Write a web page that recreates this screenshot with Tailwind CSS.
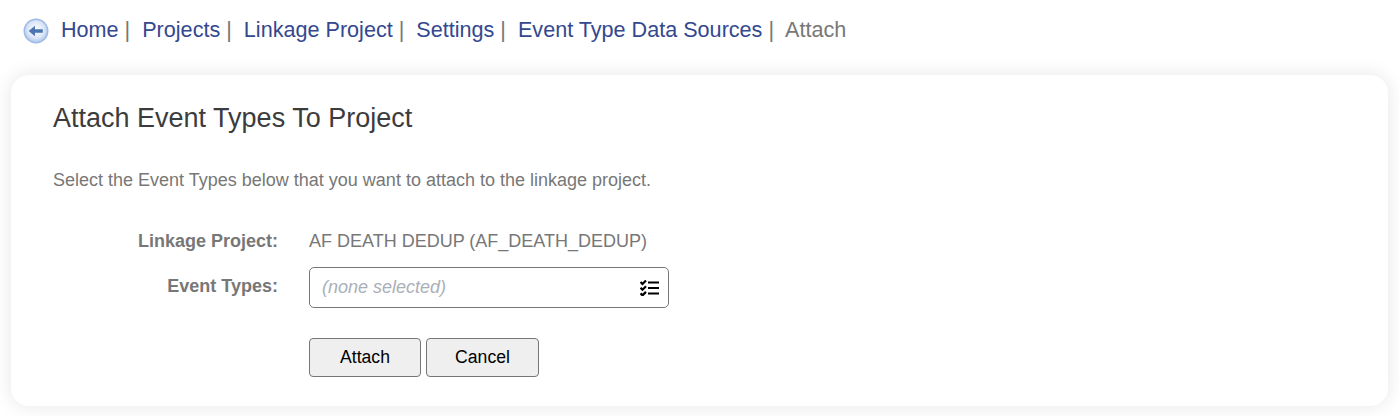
<!DOCTYPE html>
<html lang="en">
<head>
    <meta charset="UTF-8">
    <title>Attach Event Types To Project</title>
    <script src="https://cdn.jsdelivr.net/npm/@tailwindcss/browser@4"></script>
</head>
<body class="bg-white font-['Liberation_Sans',Arial,sans-serif] h-[416px] overflow-hidden">

    <!-- Breadcrumb -->
    <nav class="flex items-center h-[60px] pl-[23px] text-[21.6px] text-[#777]">
        <svg class="w-[26px] h-[26px] mr-[12px] mt-[2px]" viewBox="0 0 25 25">
            <defs>
                <radialGradient id="backFill" cx="50%" cy="45%" r="55%">
                    <stop offset="0%" stop-color="#ffffff"/>
                    <stop offset="65%" stop-color="#dbe6f7"/>
                    <stop offset="100%" stop-color="#a9c3ea"/>
                </radialGradient>
            </defs>
            <circle cx="12.5" cy="12.5" r="11.3" fill="url(#backFill)" stroke="#9dbbe6" stroke-width="1.4"/>
            <path d="M5.5 12.5 L11.5 7.5 V10.8 H19 V14.2 H11.5 V17.5 Z" fill="#4a75b0"/>
        </svg>
        <a class="text-[#34488f]">Home</a><span class="ml-[6px] mr-[12px]">|</span>
        <a class="text-[#34488f]">Projects</a><span class="ml-[6px] mr-[12px]">|</span>
        <a class="text-[#34488f]">Linkage Project</a><span class="ml-[6px] mr-[12px]">|</span>
        <a class="text-[#34488f]">Settings</a><span class="ml-[6px] mr-[12px]">|</span>
        <a class="text-[#34488f]">Event Type Data Sources</a><span class="ml-[6px] mr-[11px]">|</span>
        <span>Attach</span>
    </nav>

    <!-- Card -->
    <main class="mt-[15px] mx-[11px] h-[331px] bg-white rounded-[18px] shadow-[0_0_20px_rgba(0,0,0,0.1)] pl-[42px] pt-[27px]">
        <h1 class="text-[27px] leading-[32px] text-[#3c3c3c]">Attach Event Types To Project</h1>
        <p class="mt-[36px] text-[18px] leading-[20px] text-[#777]">Select the Event Types below that you want to attach to the linkage project.</p>

        <div class="mt-[40px] flex items-center h-[22px]">
            <div class="w-[225px] text-right font-bold text-[18px] text-[#777]">Linkage Project:</div>
            <div class="ml-[31px] text-[18px] text-[#777]">AF DEATH DEDUP (AF_DEATH_DEDUP)</div>
        </div>

        <div class="mt-[15px] flex items-center">
            <div class="w-[225px] text-right font-bold text-[18px] text-[#777] -mt-[3px]">Event Types:</div>
            <div class="ml-[31px] w-[360px] h-[41px] border border-[#777] rounded-[5px] flex items-center justify-between pl-[12px] pr-[9px]">
                <span class="italic text-[18px] text-[#aab0b8]">(none selected)</span>
                <svg class="w-[19px] h-[16px]" viewBox="0 0 19 16">
                    <path d="M0.5 2 L2.5 4 L6 0.5 M0.5 7.7 L2.5 9.7 L6 6.2 M0.5 13.4 L2.5 15.4 L6 11.9" fill="none" stroke="#000" stroke-width="2.2"/>
                    <path d="M8 2.5 H19 M8 8 H19 M8 13.5 H19" stroke="#000" stroke-width="2.2"/>
                </svg>
            </div>
        </div>

        <div class="mt-[30px] ml-[256px] flex gap-[5px]">
            <button class="w-[112px] h-[39px] bg-[#efefef] border border-[#767676] rounded-[4px] text-[17.6px] text-black">Attach</button>
            <button class="w-[113px] h-[39px] bg-[#efefef] border border-[#767676] rounded-[4px] text-[17.6px] text-black">Cancel</button>
        </div>
    </main>
</body>
</html>
